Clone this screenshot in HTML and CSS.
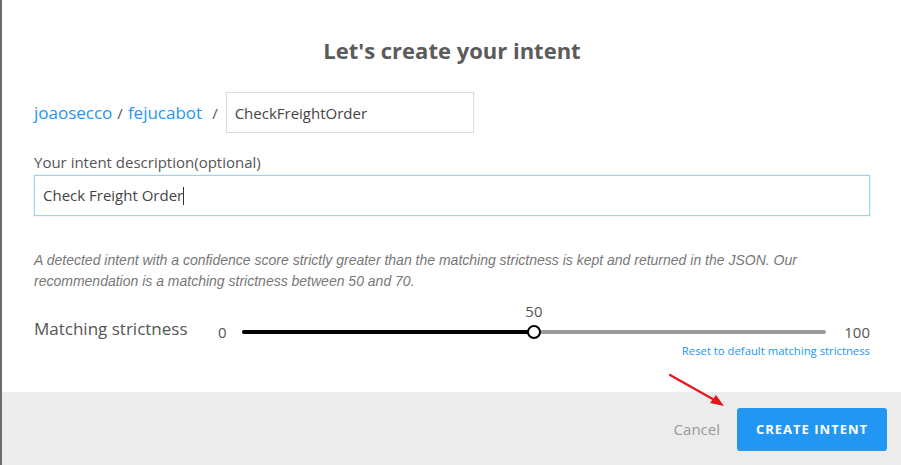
FILE: index.html
```html
<!DOCTYPE html>
<html lang="en">
  <head>
    <meta charset="UTF-8" />
    <title>Create intent</title>
    <link rel="stylesheet" href="styles.css">
  </head>
  <body>
    <div class="backdrop"></div>

    <div class="modal">
      <div class="modal-body">
        <h1 class="title">Let's create your intent</h1>

        <div class="path">
          <a class="crumb">joaosecco</a>
          <span class="sep">/</span>
          <a class="crumb">fejucabot</a>
          <span class="sep sep-last">/</span>
          <input class="name-input" type="text" value="CheckFreightOrder">
        </div>

        <label class="field-label">Your intent description(optional)</label>
        <div class="desc-input">Check Freight Order<span class="caret"></span></div>

        <p class="hint">A detected intent with a confidence score strictly greater than the matching strictness is kept and returned in the JSON. Our recommendation is a matching strictness between 50 and 70.</p>

        <div class="strictness">
          <span class="strictness-label">Matching strictness</span>
          <div class="slider-area">
            <div class="slider-row">
              <span class="bound">0</span>
              <div class="track">
                <div class="track-fill" style="width: 50%"></div>
                <div class="knob" style="left: 50%">
                  <span class="knob-value">50</span>
                </div>
              </div>
              <span class="bound">100</span>
            </div>
            <a class="reset">Reset to default matching strictness</a>
          </div>
        </div>
      </div>

      <div class="modal-footer">
        <a class="cancel">Cancel</a>
        <button class="btn-create">CREATE INTENT</button>
      </div>
    </div>

    <!-- seta vermelha de anotação -->
    <svg class="arrow" width="70" height="45" viewBox="0 0 70 45">
      <line x1="2" y1="3" x2="50" y2="30" stroke="#e8141b" stroke-width="2.2" stroke-linecap="round" />
      <polygon points="56,34 42,31 48,23" fill="#e8141b" />
    </svg>
  </body>
</html>
```

FILE: styles.css
```css
* {
  padding: 0;
  margin: 0;
  box-sizing: border-box;
}

body {
  width: 901px;
  height: 465px;
  overflow: hidden;
  display: flex;
  font-family: "Open Sans", "Liberation Sans", sans-serif;
  background-color: #fff;
  position: relative;
}

.backdrop {
  width: 2px;
  background-color: #6c6c6c;
}

.modal {
  flex: 1;
  display: flex;
  flex-direction: column;
  background-color: #fff;
}

.modal-body {
  flex: 1;
  padding: 35px 31px 0 32px;
}

.title {
  text-align: center;
  font-size: 22px;
  font-weight: 700;
  color: #5b5b5b;
  line-height: 30px;
}

/* caminho usuario / bot / nome */
.path {
  display: flex;
  align-items: center;
  margin-top: 27px;
}

.crumb {
  color: #2196f3;
  font-size: 17px;
  cursor: pointer;
}

.sep {
  color: #555;
  font-size: 15px;
  margin: 0 5px;
}

.sep-last {
  margin: 0 8px 0 10px;
}

.name-input {
  width: 248px;
  height: 41px;
  border: 1px solid #dcdcdc;
  padding: 0 8px;
  font-family: "Open Sans", "Liberation Sans", sans-serif;
  font-size: 15px;
  color: #444;
  outline: none;
}

.field-label {
  display: block;
  margin-top: 18px;
  font-size: 15px;
  color: #555;
  line-height: 22px;
}

.desc-input {
  height: 41px;
  margin-top: 2px;
  border: 1px solid #9bd0f7;
  box-shadow: 0 0 2px #cde6fa;
  padding: 0 8px;
  font-size: 15px;
  line-height: 39px;
  color: #444;
}

.caret {
  display: inline-block;
  width: 1px;
  height: 18px;
  background-color: #333;
  vertical-align: -4px;
}

.hint {
  margin-top: 34px;
  font-family: "Liberation Sans", Arial, sans-serif;
  font-style: italic;
  font-size: 14px;
  line-height: 21px;
  color: #777;
  padding-right: 40px;
}

/* slider */
.strictness {
  display: flex;
  align-items: flex-start;
  margin-top: 25px;
}

.strictness-label {
  font-size: 17px;
  color: #555;
  line-height: 24px;
  width: 184px;
}

.slider-area {
  flex: 1;
  display: flex;
  flex-direction: column;
}

.slider-row {
  display: flex;
  align-items: center;
  height: 24px;
  margin-top: 3px;
}

.bound {
  font-size: 15px;
  color: #555;
}

.track {
  flex: 1;
  position: relative;
  height: 4px;
  border-radius: 2px;
  background-color: #999;
  margin: 0 18px 0 15px;
}

.track-fill {
  height: 100%;
  border-radius: 2px;
  background-color: #000;
}

.knob {
  position: absolute;
  top: -5px;
  width: 14px;
  height: 14px;
  margin-left: -7px;
  border: 2px solid #000;
  border-radius: 50%;
  background-color: #fff;
}

.knob-value {
  position: absolute;
  bottom: 16px;
  left: 50%;
  transform: translateX(-50%);
  font-size: 15px;
  color: #555;
}

.reset {
  align-self: flex-end;
  font-size: 11.3px;
  color: #2196f3;
  margin-top: -1px;
  cursor: pointer;
}

/* rodapé */
.modal-footer {
  height: 73px;
  background-color: #ececec;
  display: flex;
  align-items: center;
  justify-content: flex-end;
  padding-right: 14px;
  padding-top: 1px;
}

.cancel {
  font-size: 15px;
  color: #999;
  margin-right: 17px;
  cursor: pointer;
}

.btn-create {
  width: 150px;
  height: 43px;
  border: none;
  border-radius: 3px;
  background-color: #2196f3;
  color: #fff;
  font-family: "Open Sans", "Liberation Sans", sans-serif;
  font-weight: 700;
  font-size: 13px;
  letter-spacing: 1px;
  cursor: pointer;
}

.arrow {
  position: absolute;
  left: 668px;
  top: 372px;
}
```
